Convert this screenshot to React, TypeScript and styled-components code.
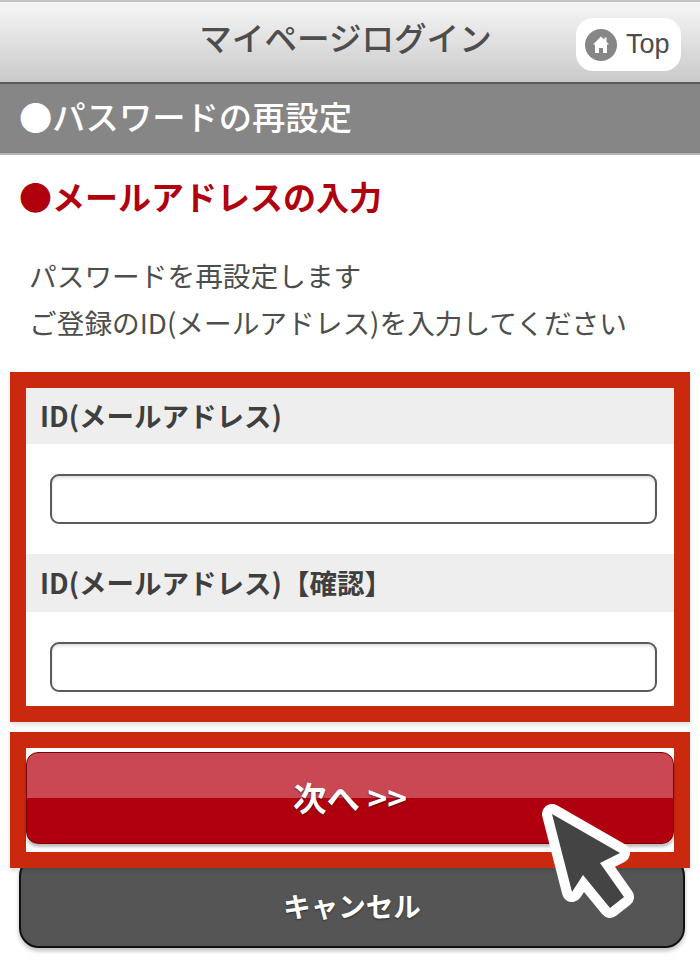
import styled, { createGlobalStyle } from 'styled-components';

const COLORS = {
  frame: '#cb290e',
  crimson: '#b0000e',
  crimsonLight: '#c94854',
  band: '#868686',
  text: '#4d4d4d',
  charcoal: '#555555',
};

const FIELDS = [
  { id: 'mail', label: 'ID(メールアドレス)', labelHeight: 56, bottom: 30 },
  { id: 'confirm', label: 'ID(メールアドレス)【確認】', labelHeight: 58, bottom: 14 },
];

export default function App() {
  return (
    <Page>
      <GlobalStyle />
      <Header>
        <HeaderTitle>マイページログイン</HeaderTitle>
        <TopLink>
          <HomeIcon />
          Top
        </TopLink>
      </Header>
      <SectionBand>●パスワードの再設定</SectionBand>
      <StepHeading>●メールアドレスの入力</StepHeading>
      <Message>
        パスワードを再設定します
        <br />
        ご登録のID(メールアドレス)を入力してください
      </Message>
      <FormFrame>
        {FIELDS.map((field) => (
          <div key={field.id}>
            <FieldLabel $height={field.labelHeight} htmlFor={field.id}>
              {field.label}
            </FieldLabel>
            <FieldBody $bottom={field.bottom}>
              <TextInput id={field.id} type='email' />
            </FieldBody>
          </div>
        ))}
      </FormFrame>
      <ButtonFrame>
        <NextButton type='button'>次へ &gt;&gt;</NextButton>
      </ButtonFrame>
      <CancelButton type='button'>キャンセル</CancelButton>
      <Cursor />
    </Page>
  );
}

function HomeIcon() {
  return (
    <HomeSvg viewBox='0 0 32 32' aria-hidden='true'>
      <circle cx='16' cy='16' r='16' fill='#868686' />
      <path
        d='M16 7.5 L19.5 10.8 L19.5 8.5 L21.5 8.5 L21.5 12.7 L24 15.5 L22 15.5 L22 24 L18 24 L18 19 L14 19 L14 24 L10 24 L10 15.5 L8 15.5 Z'
        fill='#ffffff'
      />
    </HomeSvg>
  );
}

function Cursor() {
  return (
    <CursorSvg viewBox='0 0 110 120' aria-hidden='true'>
      <path
        d='M12 14 L80 53 L60 63 L84 97 L70 108 L43 75 L32 92 Z'
        fill='#444444'
        stroke='#ffffff'
        strokeWidth='20'
        strokeLinejoin='round'
        paintOrder='stroke'
      />
    </CursorSvg>
  );
}

const GlobalStyle = createGlobalStyle`
  html,
  body {
    margin: 0;
    background: #ffffff;
  }

  * {
    box-sizing: border-box;
  }
`;

const Page = styled.div`
  position: relative;
  width: 700px;
  height: 980px;
  overflow: hidden;

  background: #ffffff;
  font-family: 'Noto Sans CJK JP', 'Noto Sans', sans-serif;
`;

const Header = styled.header`
  height: 84px;
  padding-right: 19px;

  display: flex;
  align-items: center;
  justify-content: flex-end;

  position: relative;

  background: linear-gradient(#f6f6f6, #c9c9c9);
  border-top: 2px solid #c4c4c4;
  border-bottom: 2px solid #5c5c5c;
`;

const HeaderTitle = styled.h1`
  position: absolute;
  left: 0;
  right: 9px;
  top: 13px;

  margin: 0;

  color: ${COLORS.text};
  font-size: 32.6px;
  font-weight: 500;
  line-height: 44px;
  text-align: center;
`;

const TopLink = styled.a`
  width: 105px;
  height: 53px;
  margin-top: 5px;
  padding-left: 9px;

  display: flex;
  align-items: center;
  gap: 9px;

  background: #ffffff;
  border-radius: 17px;

  color: ${COLORS.text};
  font-family: 'Liberation Sans', sans-serif;
  font-size: 27px;
`;

const HomeSvg = styled.svg`
  width: 32px;
  height: 32px;
  flex-shrink: 0;
`;

const SectionBand = styled.h2`
  height: 71px;
  margin: 0;
  padding: 0 0 7px 19px;

  display: flex;
  align-items: center;

  background: ${COLORS.band};
  border-bottom: 2px solid #b4b4b4;

  color: #ffffff;
  font-size: 33.3px;
  font-weight: 500;
`;

const StepHeading = styled.h3`
  height: 86px;
  margin: 0;
  padding: 0 0 4px 19px;

  display: flex;
  align-items: center;

  color: ${COLORS.crimson};
  font-size: 33px;
  font-weight: 700;
`;

const Message = styled.p`
  height: 131px;
  margin: 0;
  padding: 11px 0 0 29px;

  color: ${COLORS.text};
  font-size: 27.7px;
  line-height: 47px;
  white-space: nowrap;
`;

const Frame = styled.div`
  position: relative;
  z-index: 1;

  margin: 0 10px;

  border: 16px solid ${COLORS.frame};
  background: #ffffff;
  box-shadow: 0 3px 4px rgba(0, 0, 0, 0.12);
`;

const FormFrame = styled(Frame)`
  height: 350px;
`;

const ButtonFrame = styled(Frame)`
  height: 136px;
  margin-top: 10px;
  padding-top: 4px;
`;

const FieldLabel = styled.label<{ $height: number }>`
  height: ${({ $height }) => $height}px;
  padding: 0 0 3px 14px;

  display: flex;
  align-items: center;

  background: #eeeeee;

  color: #3f3f3f;
  font-size: 27.5px;
  font-weight: 700;
`;

const FieldBody = styled.div<{ $bottom: number }>`
  padding: 30px 17px ${({ $bottom }) => $bottom}px 24px;
`;

const TextInput = styled.input`
  display: block;
  width: 100%;
  height: 50px;

  background: #ffffff;
  border: 2px solid #5a5a5a;
  border-radius: 9px;
  box-shadow: inset 0 2px 3px rgba(0, 0, 0, 0.12);
  outline: none;
`;

const NextButton = styled.button`
  display: block;
  width: 100%;
  height: 92px;
  padding: 0 0 4px;

  background: linear-gradient(
    ${COLORS.crimsonLight} 50%,
    ${COLORS.crimson} 50%
  );
  border: 1px solid #7a0008;
  border-radius: 12px;
  box-shadow: 0 3px 3px rgba(0, 0, 0, 0.25);

  color: #ffffff;
  font-family: inherit;
  font-size: 33.5px;
  font-weight: 700;
  text-shadow: 0 1px 2px rgba(0, 0, 0, 0.5);
`;

const CancelButton = styled.button`
  display: block;
  width: 666px;
  height: 92px;
  margin: -12px 0 0 19px;
  padding: 6px 0 0;

  background: ${COLORS.charcoal};
  border: 2px solid #111111;
  border-radius: 20px;
  box-shadow: 0 3px 4px rgba(0, 0, 0, 0.25);

  color: #ffffff;
  font-family: inherit;
  font-size: 27.5px;
  font-weight: 700;
  text-shadow: 0 1px 2px rgba(0, 0, 0, 0.5);
`;

const CursorSvg = styled.svg`
  position: absolute;
  left: 540px;
  top: 800px;
  z-index: 2;

  width: 110px;
  height: 120px;
`;
